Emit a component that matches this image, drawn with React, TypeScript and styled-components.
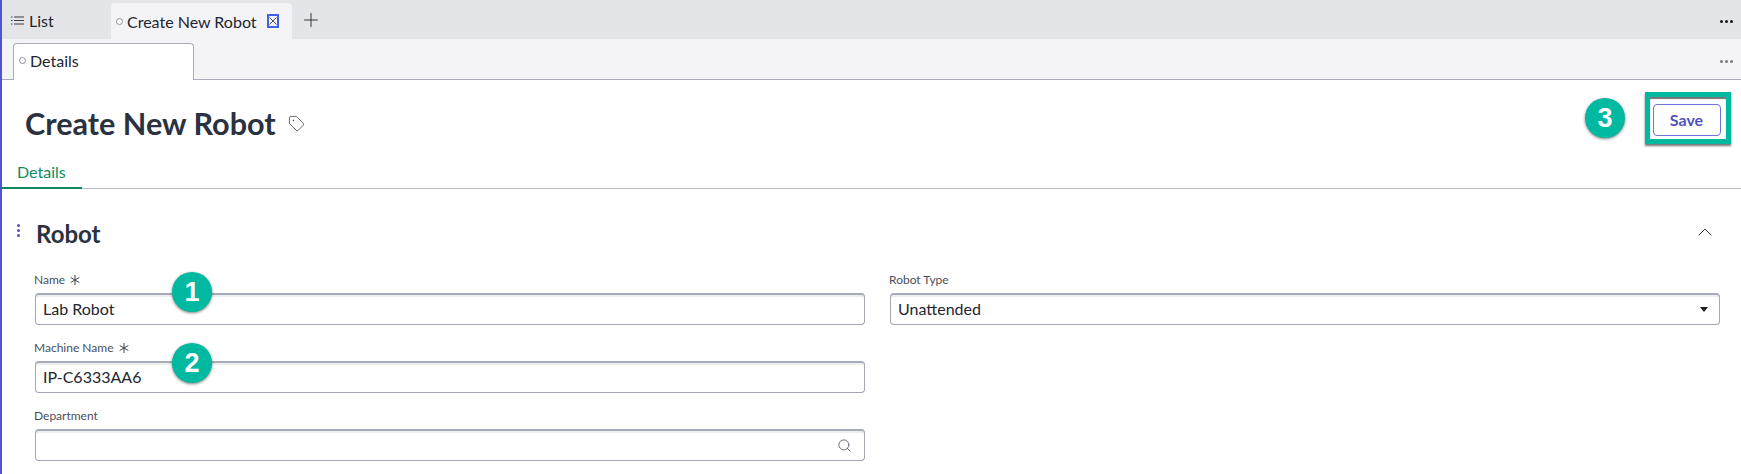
import React from "react";
import styled, { createGlobalStyle } from "styled-components";
import { Plus, Search, Tag, ChevronUp } from "lucide-react";

const GlobalStyle = createGlobalStyle`
  html, body {
    margin: 0;
    padding: 0;
    background: #fff;
    overflow: hidden;
  }
  body {
    font-family: Lato, "Liberation Sans", sans-serif;
  }
`;

const Page = styled.div`
  width: 1741px;
  height: 474px;
  box-sizing: border-box;
  border-left: 2px solid #4f55cf;
  overflow: hidden;
  display: flex;
  flex-direction: column;
`;

const WorkspaceBar = styled.div`
  height: 39px;
  flex: none;
  background: #e4e5e9;
  display: flex;
  align-items: flex-end;
  padding-right: 8px;
`;

const ListTab = styled.div`
  width: 109px;
  height: 39px;
  box-sizing: border-box;
  padding-left: 9px;
  padding-top: 2px;
  display: flex;
  align-items: center;
  gap: 5px;
  font-size: 16px;
  color: #23262e;
`;

const OpenTab = styled.div`
  width: 181px;
  height: 36px;
  box-sizing: border-box;
  padding-left: 5px;
  background: #f4f4f8;
  border-radius: 4px 4px 0 0;
  display: flex;
  align-items: center;
  font-size: 16px;
  color: #23262e;
`;

const Dot = styled.span`
  width: 5px;
  height: 5px;
  border: 1px solid #8b90a0;
  border-radius: 50%;
  margin-right: 4px;
  flex: none;
  background: #fff;
`;

const CloseBox = styled.span`
  margin-left: 11px;
  width: 8px;
  height: 10px;
  border: 1px solid #3f62e8;
  outline: 1px solid #3f62e8;
  display: flex;
  align-items: center;
`;

const AddTab = styled.div`
  height: 39px;
  margin-left: 8px;
  display: flex;
  align-items: center;
  color: #33363f;
`;

const More = styled.div<{ $color: string; $nudge?: number }>`
  margin-left: auto;
  margin-top: ${({ $nudge }) => $nudge ?? 0}px;
  align-self: center;
  display: flex;
  gap: 2px;
  & > i {
    width: 3px;
    height: 3px;
    border-radius: 50%;
    background: ${({ $color }) => $color};
  }
`;

const ViewBar = styled.div`
  height: 41px;
  flex: none;
  box-sizing: border-box;
  background: #f4f4f7;
  border-bottom: 1px solid #a9abbb;
  padding: 4px 8px 0 11px;
  display: flex;
`;

const ViewTab = styled.div`
  width: 181px;
  height: 37px;
  box-sizing: border-box;
  background: #fff;
  border: 1px solid #a9abbb;
  border-bottom: none;
  border-radius: 4px 4px 0 0;
  padding-left: 5px;
  padding-bottom: 4px;
  display: flex;
  align-items: center;
  font-size: 16px;
  color: #23262e;
`;

const Header = styled.div`
  height: 68px;
  flex: none;
  position: relative;
  display: flex;
  align-items: center;
  padding-left: 23px;
  padding-right: 10px;
`;

const Title = styled.h1`
  margin: 0;
  position: relative;
  top: 10px;
  font-size: 30.6px;
  font-weight: 700;
  line-height: 36px;
  color: #2a3140;
`;

const TagIcon = styled(Tag)`
  margin-left: 12px;
  position: relative;
  top: 9px;
  color: #4a4e5a;
`;

const SaveFrame = styled.div`
  margin-left: auto;
  width: 86px;
  height: 52px;
  box-sizing: border-box;
  position: relative;
  top: 4px;
  border: 5px solid #00b9a0;
  box-shadow: 0 2px 2px rgba(40, 40, 40, 0.65), inset 0 2px 1px rgba(40, 40, 40, 0.65);
  padding: 0 3px 3px 0;
  display: flex;
  align-items: flex-end;
  justify-content: center;
`;

const SaveButton = styled.button`
  width: 68px;
  height: 32px;
  padding: 0 0 2px;
  background: #fff;
  border: 1px solid #6f72d8;
  border-radius: 4px;
  font-family: inherit;
  font-size: 16px;
  font-weight: 700;
  color: #4f52bd;
`;

const Badge = styled.div<{ $left: number; $top: number }>`
  position: absolute;
  left: ${({ $left }) => $left}px;
  top: ${({ $top }) => $top}px;
  width: 40px;
  height: 40px;
  border-radius: 50%;
  background: #00b9a0;
  box-shadow: 0 1px 3px rgba(40, 40, 40, 0.6);
  color: #fff;
  font-family: "Liberation Sans", sans-serif;
  font-size: 27px;
  font-weight: 700;
  display: flex;
  align-items: center;
  justify-content: center;
  z-index: 2;
`;

const TabStrip = styled.div`
  height: 41px;
  flex: none;
  box-sizing: border-box;
  border-bottom: 1px solid #b9bccb;
  display: flex;
`;

const SubTab = styled.div`
  width: 80px;
  height: 41px;
  box-sizing: border-box;
  padding-left: 15px;
  padding-top: 14px;
  border-bottom: 2px solid #0e8a5f;
  font-size: 16px;
  line-height: 19px;
  color: #0e8a5f;
`;

const Section = styled.div`
  position: relative;
  padding: 0 19px 0 33px;
`;

const SectionHead = styled.div`
  height: 81px;
  display: flex;
  align-items: center;
  justify-content: space-between;
  padding-left: 1px;
  padding-right: 5px;
`;

const SectionTitle = styled.h2`
  margin: 0;
  position: relative;
  top: 4px;
  font-size: 24px;
  font-weight: 700;
  color: #2a3140;
`;

const Collapse = styled(ChevronUp)`
  position: relative;
  top: 2px;
  color: #33363f;
`;

const Grip = styled.div`
  position: absolute;
  left: 15px;
  top: 35px;
  display: flex;
  flex-direction: column;
  gap: 2px;
  & > i {
    width: 3px;
    height: 3px;
    border-radius: 50%;
    background: #4f52bd;
  }
`;

const FormGrid = styled.div`
  display: grid;
  grid-template-columns: 830px 830px;
  column-gap: 25px;
  align-items: start;
`;

const Column = styled.div`
  display: flex;
  flex-direction: column;
  gap: 13px;
`;

const Field = styled.div`
  display: flex;
  flex-direction: column;
`;

const Label = styled.label`
  height: 23px;
  font-size: 12px;
  line-height: 18px;
  color: #4a4e5c;
  display: flex;
  align-items: center;
  gap: 5px;
  margin-left: -1px;
  padding-bottom: 3px;
  box-sizing: border-box;
`;

const InputBox = styled.div`
  height: 32px;
  box-sizing: border-box;
  background: #fff;
  border: 1px solid #a3a6b5;
  border-top: 2px solid #a8abb9;
  border-radius: 4px;
  box-shadow: inset 0 2px 0 #eceef0;
  padding: 0 8px 2px 7px;
  display: flex;
  align-items: center;
  justify-content: space-between;
  font-size: 16px;
  color: #23262e;
`;

const Caret = styled.span`
  width: 0;
  height: 0;
  border-left: 4.5px solid transparent;
  border-right: 4.5px solid transparent;
  border-top: 5px solid #1d1f26;
  margin-right: 3px;
  margin-top: 2px;
`;

const SearchIcon = styled(Search)`
  color: #5a5e6a;
  margin-left: auto;
  margin-top: 2px;
  margin-right: 4px;
`;

function Dots({ color, nudge }: { color: string; nudge?: number }) {
  return <More $color={color} $nudge={nudge}><i /><i /><i /></More>;
}

function ListIcon() {
  return (
    <svg width="13" height="9" viewBox="0 0 13 9" fill="none" stroke="#3a3d47" strokeWidth="1">
      <path d="M0 1h1.5M3 1h10M0 4.5h1.5M3 4.5h10M0 8h1.5M3 8h10" />
    </svg>
  );
}

function CloseIcon() {
  return (
    <CloseBox>
      <svg width="8" height="8" viewBox="0 0 8 8" fill="none" stroke="#4a4e5a" strokeWidth="1">
        <path d="M0.5 0.5l7 7M7.5 0.5l-7 7" />
      </svg>
    </CloseBox>
  );
}

function RequiredMark() {
  return (
    <svg width="10" height="10" viewBox="0 0 10 10" fill="none" stroke="#3e4250" strokeWidth="1">
      <path d="M5 0v10M0.7 2.5l8.6 5M9.3 2.5l-8.6 5" />
    </svg>
  );
}

export default function App() {
  return (
    <Page>
      <GlobalStyle />
      <WorkspaceBar>
        <ListTab><ListIcon />List</ListTab>
        <OpenTab><Dot />Create New Robot<CloseIcon /></OpenTab>
        <AddTab><Plus size={22} strokeWidth={1.1} /></AddTab>
        <Dots color="#16181d" nudge={3} />
      </WorkspaceBar>
      <ViewBar>
        <ViewTab><Dot />Details</ViewTab>
        <Dots color="#777a85" />
      </ViewBar>
      <Header>
        <Title>Create New Robot</Title>
        <TagIcon size={17} strokeWidth={1.2} />
        <Badge $left={1583} $top={18}>3</Badge>
        <SaveFrame><SaveButton>Save</SaveButton></SaveFrame>
      </Header>
      <TabStrip><SubTab>Details</SubTab></TabStrip>
      <Section>
        <Grip><i /><i /><i /></Grip>
        <Badge $left={170} $top={83}>1</Badge>
        <Badge $left={170} $top={154}>2</Badge>
        <SectionHead>
          <SectionTitle>Robot</SectionTitle>
          <Collapse size={24} strokeWidth={1} />
        </SectionHead>
        <FormGrid>
          <Column>
            <Field>
              <Label>Name <RequiredMark /></Label>
              <InputBox>Lab Robot</InputBox>
            </Field>
            <Field>
              <Label>Machine Name <RequiredMark /></Label>
              <InputBox>IP-C6333AA6</InputBox>
            </Field>
            <Field>
              <Label>Department</Label>
              <InputBox><SearchIcon size={15} strokeWidth={1.4} /></InputBox>
            </Field>
          </Column>
          <Column>
            <Field>
              <Label>Robot Type</Label>
              <InputBox>Unattended<Caret /></InputBox>
            </Field>
          </Column>
        </FormGrid>
      </Section>
    </Page>
  );
}
